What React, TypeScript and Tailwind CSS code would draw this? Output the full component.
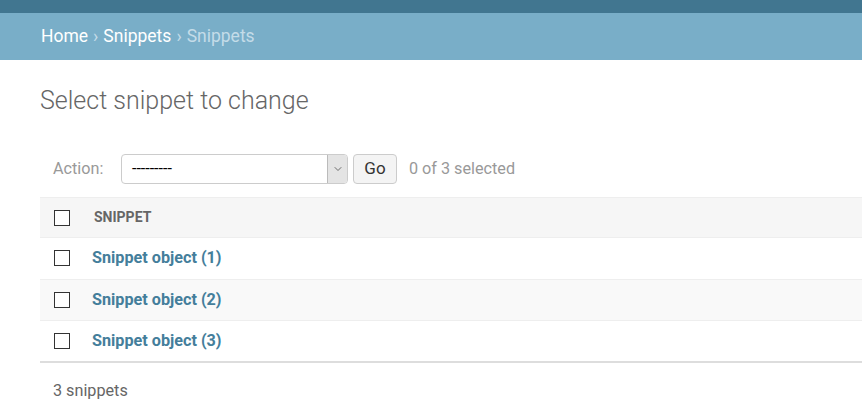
import { ChevronDown } from 'lucide-react'

const ROWS = ['Snippet object (1)', 'Snippet object (2)', 'Snippet object (3)']

function Box() {
  return <span className="block w-[16px] h-[16px] border border-[#333] bg-white" />
}

export default function App() {
  return (
    <div className="min-h-screen bg-white text-[#333] font-['Roboto','Liberation_Sans',sans-serif]">
      <div className="h-[13px] bg-[#417690]" />
      <div className="h-[47px] bg-[#79aec8] px-[41px] flex items-center text-[17.5px] text-white">
        <span>Home</span>
        <span className="mx-[5px] text-[#c4dce8]">›</span>
        <span>Snippets</span>
        <span className="mx-[5px] text-[#c4dce8]">›</span>
        <span className="text-[#c4dce8]">Snippets</span>
      </div>

      <div className="pl-[40px]">
        <h1 className="mt-[26px] text-[25px] font-light text-[#666] leading-[30px]">Select snippet to change</h1>

        <div className="mt-[38px] flex items-center h-[30px] pl-[13px] text-[16.2px]">
          <span className="text-[#999] w-[68px]">Action:</span>
          <div className="flex h-[30px] w-[227px] border border-[#ccc] rounded-[4px] overflow-hidden">
            <div className="flex-1 flex items-center pl-[10px] text-[16px] text-black">---------</div>
            <div className="w-[20px] bg-[#e4e4e4] border-l border-[#bbb] flex items-center justify-center">
              <ChevronDown className="w-[12px] h-[12px] text-[#444]" strokeWidth={1.5} />
            </div>
          </div>
          <button className="ml-[5px] h-[30px] w-[44px] border border-[#ccc] rounded-[4px] bg-[#f4f4f4] text-[17px] text-[#333]">
            Go
          </button>
          <span className="ml-[12px] text-[#999]">0 of 3 selected</span>
        </div>

        <div className="mt-[13px]">
          <div className="h-[41px] bg-[#f6f6f6] border-t border-b border-[#eee] flex items-center pl-[14px]">
            <Box />
            <span className="ml-[24px] text-[14px] font-bold text-[#666] uppercase">Snippet</span>
          </div>
          {ROWS.map((r, i) => (
            <div
              key={r}
              className={`flex items-center pl-[14px] border-b ${i === 1 ? 'bg-[#f9f9f9]' : 'bg-white'} ${
                i === ROWS.length - 1 ? 'h-[42px] border-[#ddd] border-b-2' : 'h-[41.5px] border-[#eee]'
              }`}
            >
              <Box />
              <span className="ml-[22px] text-[16.2px] font-bold text-[#447e9b]">{r}</span>
            </div>
          ))}
          <div className="pl-[13px] pt-[16px] text-[16.2px] text-[#666]">3 snippets</div>
        </div>
      </div>
    </div>
  )
}
